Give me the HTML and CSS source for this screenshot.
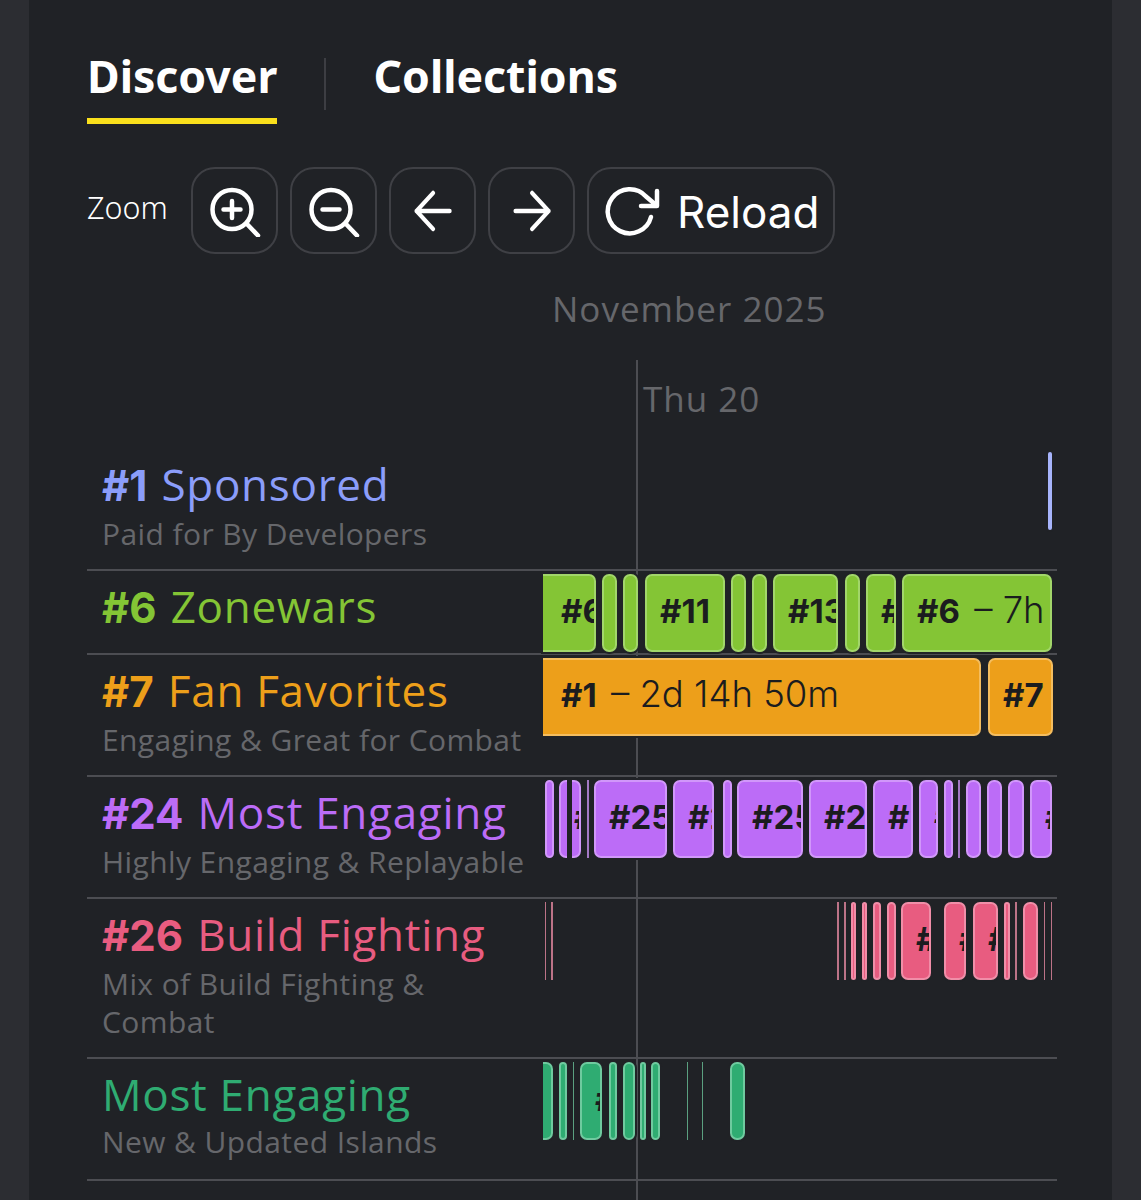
FILE: index.html
```html
<!DOCTYPE html>
<html lang="en">
<head>
    <meta charset="UTF-8">
    <meta name="viewport" content="width=device-width, initial-scale=1.0">
    <title>Discover</title>
    <link rel="stylesheet" href="styles.css">
</head>
<body>
    <main class="panel">
        <nav class="tabs">
            <a class="tab active">Discover</a>
            <span class="tab-divider"></span>
            <a class="tab">Collections</a>
        </nav>

        <div class="toolbar">
            <span class="zoom-label">Zoom</span>
            <button class="tool-btn">
                <svg viewBox="0 0 52 52" width="52" height="52"><circle cx="23" cy="24.5" r="19.5"/><path d="M23 16v17M14.5 24.5h17M37.5 38.5L49 50.5"/></svg>
            </button>
            <button class="tool-btn">
                <svg viewBox="0 0 52 52" width="52" height="52"><circle cx="23" cy="24.5" r="19.5"/><path d="M14.5 24.5h17M37.5 38.5L49 50.5"/></svg>
            </button>
            <button class="tool-btn">
                <svg viewBox="0 0 48 48" width="48" height="48"><path d="M42 24H6M24 6L6 24l18 18" transform="translate(2 0) scale(.92 1)"/></svg>
            </button>
            <button class="tool-btn">
                <svg viewBox="0 0 48 48" width="48" height="48"><path d="M6 24h36M24 6l18 18-18 18" transform="translate(2 0) scale(.92 1)"/></svg>
            </button>
            <button class="tool-btn reload">
                <svg viewBox="0 0 58 58" width="58" height="58"><path d="M48 35A22 22 0 1 1 43 14.5L53 23"/><path d="M54 9V24H38"/></svg>
                <span class="reload-text">Reload</span>
            </button>
        </div>

        <div class="month">November 2025</div>

        <section class="chart">
            <div class="now-line"></div>
            <div class="day">Thu 20</div>

            <div class="row row-first blue">
                <div class="label">
                    <h3><b>#1</b> Sponsored</h3>
                    <p>Paid for By Developers</p>
                </div>
                <div class="track">
                    <div class="bar" style="left:505px;width:4px"></div>
                </div>
            </div>

            <div class="row row-short green">
                <div class="label">
                    <h3><b>#6</b> Zonewars</h3>
                </div>
                <div class="track">
                    <div class="bar start" style="left:0;width:53px"><b>#6</b></div>
                    <div class="bar" style="left:59px;width:15px"></div>
                    <div class="bar" style="left:80px;width:15px"></div>
                    <div class="bar" style="left:102px;width:80px"><b>#11</b></div>
                    <div class="bar" style="left:188px;width:15px"></div>
                    <div class="bar" style="left:209px;width:15px"></div>
                    <div class="bar" style="left:230px;width:65px"><b>#13</b></div>
                    <div class="bar" style="left:302px;width:15px"></div>
                    <div class="bar" style="left:323px;width:30px"><b>#6</b></div>
                    <div class="bar" style="left:359px;width:150px"><b>#6</b> – 7h</div>
                </div>
            </div>

            <div class="row orange">
                <div class="label">
                    <h3><b>#7</b> Fan Favorites</h3>
                    <p>Engaging &amp; Great for Combat</p>
                </div>
                <div class="track">
                    <div class="bar start" style="left:0;width:438px"><b>#1</b> – 2d 14h 50m</div>
                    <div class="bar" style="left:445px;width:65px"><b>#7</b></div>
                </div>
            </div>

            <div class="row purple">
                <div class="label">
                    <h3><b>#24</b> Most Engaging</h3>
                    <p>Highly Engaging &amp; Replayable</p>
                </div>
                <div class="track">
                    <div class="bar" style="left:2px;width:9px"></div>
                    <div class="bar" style="left:16px;width:22px"><b>#24</b></div>
                    <div class="bar-gap" style="left:24px;width:5px"></div>
                    <div class="bar thin" style="left:44px;width:2px"></div>
                    <div class="bar" style="left:51px;width:73px"><b>#25</b></div>
                    <div class="bar" style="left:130px;width:41px"><b>#24</b></div>
                    <div class="bar" style="left:180px;width:9px"></div>
                    <div class="bar" style="left:194px;width:66px"><b>#25</b></div>
                    <div class="bar" style="left:266px;width:58px"><b>#24</b></div>
                    <div class="bar" style="left:330px;width:40px"><b>#25</b></div>
                    <div class="bar" style="left:376px;width:19px"><b>#24</b></div>
                    <div class="bar" style="left:401px;width:9px"></div>
                    <div class="bar thin" style="left:415px;width:2px"></div>
                    <div class="bar" style="left:423px;width:15px"></div>
                    <div class="bar" style="left:444px;width:15px"></div>
                    <div class="bar" style="left:465px;width:16px"></div>
                    <div class="bar" style="left:487px;width:22px"><b>#24</b></div>
                </div>
            </div>

            <div class="row row-tall pink">
                <div class="label">
                    <h3><b>#26</b> Build Fighting</h3>
                    <p>Mix of Build Fighting &amp; Combat</p>
                </div>
                <div class="track">
                    <div class="bar thin" style="left:2px;width:1px"></div>
                    <div class="bar thin" style="left:8px;width:2px"></div>
                    <div class="bar thin" style="left:294px;width:2px"></div>
                    <div class="bar thin" style="left:301px;width:2px"></div>
                    <div class="bar" style="left:308px;width:5px"></div>
                    <div class="bar" style="left:319px;width:5px"></div>
                    <div class="bar" style="left:330px;width:8px"></div>
                    <div class="bar" style="left:344px;width:9px"></div>
                    <div class="bar" style="left:358px;width:30px"><b>#26</b></div>
                    <div class="bar" style="left:401px;width:22px"><b>#26</b></div>
                    <div class="bar" style="left:430px;width:25px"><b>#26</b></div>
                    <div class="bar" style="left:461px;width:6px"></div>
                    <div class="bar thin" style="left:472px;width:2px"></div>
                    <div class="bar" style="left:480px;width:15px"></div>
                    <div class="bar thin" style="left:501px;width:1px"></div>
                    <div class="bar thin" style="left:508px;width:1px"></div>
                </div>
            </div>

            <div class="row teal">
                <div class="label">
                    <h3>Most Engaging</h3>
                    <p>New &amp; Updated Islands</p>
                </div>
                <div class="track">
                    <div class="bar start" style="left:0;width:10px"></div>
                    <div class="bar" style="left:16px;width:8px"></div>
                    <div class="bar thin" style="left:30px;width:1px"></div>
                    <div class="bar" style="left:37px;width:22px"><b>#3</b></div>
                    <div class="bar" style="left:66px;width:8px"></div>
                    <div class="bar" style="left:80px;width:12px"></div>
                    <div class="bar" style="left:97px;width:6px"></div>
                    <div class="bar" style="left:108px;width:9px"></div>
                    <div class="bar thin" style="left:144px;width:1px"></div>
                    <div class="bar thin" style="left:159px;width:1px"></div>
                    <div class="bar" style="left:187px;width:15px"></div>
                </div>
            </div>

            <div class="row row-last"></div>
        </section>
    </main>
</body>
</html>
```

FILE: styles.css
```css
html, body {
    margin: 0;
    padding: 0;
    height: 1200px;
    overflow: hidden;
    background: #2c2d32;
}

body {
    font-family: 'Open Sans', sans-serif;
    color: #fff;
    padding: 0 29px;
}

.panel {
    background: #202226;
    height: 1200px;
    padding: 51px 55px 0 58px;
    box-sizing: border-box;
    overflow: hidden;
}

.tabs {
    display: flex;
    align-items: flex-start;
    height: 73px;
}

.tab {
    font-family: 'Noto Sans', sans-serif;
    font-size: 44.6px;
    font-weight: 700;
    line-height: 50px;
    height: 67px;
    border-bottom: 6px solid transparent;
}

.tab.active {
    border-bottom-color: #fae01c;
}

.tab-divider {
    width: 2px;
    height: 52px;
    margin: 7px 47px 0 47px;
    background: #3d3e43;
}

.toolbar {
    display: flex;
    align-items: center;
    gap: 12px;
    margin-top: 43px;
}

.zoom-label {
    font-family: 'Noto Sans', sans-serif;
    font-size: 30.5px;
    font-weight: 300;
    width: 92px;
    margin-bottom: 8px;
}

.tool-btn {
    display: flex;
    align-items: center;
    justify-content: center;
    width: 87px;
    height: 87px;
    padding: 0;
    background: transparent;
    border: 2px solid #3f4045;
    border-radius: 24px;
    color: #fff;
}

.tool-btn svg {
    fill: none;
    stroke: #fff;
    stroke-width: 4.5;
    stroke-linecap: round;
    stroke-linejoin: round;
    flex: none;
}

.reload {
    width: 248px;
    gap: 16px;
    justify-content: flex-start;
    padding-left: 14px;
    font-family: 'Inter', sans-serif;
    font-size: 44px;
    font-weight: 400;
}

.reload-text {
    margin-top: 3px;
}

.month {
    color: #66676b;
    font-size: 35px;
    letter-spacing: 1px;
    line-height: 46px;
    margin: 32px 0 0 465px;
}

.chart {
    position: relative;
    margin-top: 28px;
}

.now-line {
    position: absolute;
    top: 0;
    bottom: 0;
    left: 549px;
    width: 2px;
    background: #4c4d52;
    z-index: 1;
}

.day {
    color: #66676b;
    font-size: 35px;
    letter-spacing: 1px;
    line-height: 46px;
    padding: 16px 0 0 556px;
    height: 62px;
    box-sizing: border-box;
}

.row {
    position: relative;
    display: flex;
    height: 120px;
    border-bottom: 2px solid #4c4d52;
}

.row-first {
    height: 147px;
}

.row-short {
    height: 82px;
}

.row-tall {
    height: 158px;
}

.row-last {
    height: 30px;
    border-bottom: 0;
}

.label {
    width: 450px;
    padding: 10px 0 0 15px;
    box-sizing: border-box;
}

.row-first .label {
    padding-top: 37px;
}

.label h3 {
    margin: 0;
    font-size: 44px;
    font-weight: 400;
    letter-spacing: .7px;
    line-height: 50px;
    white-space: nowrap;
}

.label h3 b {
    font-family: 'Inter', sans-serif;
    font-size: 42px;
    letter-spacing: 0;
    margin-right: 2px;
}

.label p {
    margin: 4px 0 0;
    color: #66676b;
    font-size: 30px;
    letter-spacing: .4px;
    line-height: 38px;
}

.track {
    position: absolute;
    left: 456px;
    width: 509px;
    top: 3px;
    height: 78px;
}

.row-first .track {
    top: 30px;
}

.bar {
    position: absolute;
    top: 0;
    height: 78px;
    box-sizing: border-box;
    text-indent: 13px;
    border: 2px solid var(--edge);
    border-radius: 7px;
    background: var(--fill);
    box-shadow: 0 0 0 2px #202226;
    color: #1b1c1f;
    font-family: 'Inter', sans-serif;
    font-size: 36.5px;
    font-weight: 300;
    line-height: 68px;
    white-space: nowrap;
    overflow: hidden;
    z-index: 2;
}

.bar b {
    font-size: 33px;
    font-weight: 700;
    margin-right: 4px;
}

.bar.start {
    text-indent: 18px;
    border-left: 0;
    border-radius: 0 7px 7px 0;
}

.bar.thin {
    border: 0;
    border-radius: 0;
    background: var(--edge);
    opacity: .75;
}

.bar-gap {
    position: absolute;
    top: 0;
    height: 78px;
    background: #202226;
    z-index: 3;
}

.blue { color: #8b9dfa; --fill: #8b9dfa; --edge: #a7b4fb; }
.green { color: #84c535; --fill: #84c535; --edge: #a2d66a; }
.orange { color: #ed9f1a; --fill: #ed9f1a; --edge: #f4bd5f; }
.purple { color: #bc6cf7; --fill: #bc6cf7; --edge: #d197fa; }
.pink { color: #e85c80; --fill: #e85c80; --edge: #f08ea8; }
.teal { color: #2fac72; --fill: #2fac72; --edge: #6fca9f; }
```
